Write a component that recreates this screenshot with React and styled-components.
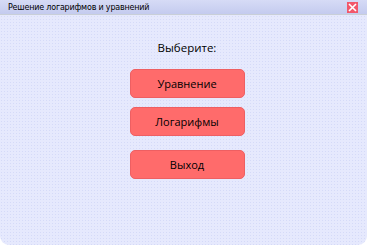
import React from 'react'
import styled, { createGlobalStyle } from 'styled-components'

const GlobalStyle = createGlobalStyle`
  html, body {
    margin: 0;
    padding: 0;
    background: #ffffff;
  }
  body {
    font-family: "Open Sans", "DejaVu Sans", sans-serif;
  }
`

const Window = styled.div`
  width: 367px;
  height: 245px;
  display: flex;
  flex-direction: column;
  background-color: #e6e9fd;
  background-image: radial-gradient(#d5daf8 0.6px, transparent 0.8px);
  background-size: 3px 3px;
  border-radius: 0 0 9px 9px;
  overflow: hidden;
`

const TitleBar = styled.div`
  height: 14px;
  display: flex;
  align-items: center;
  justify-content: space-between;
  padding: 0 9px 0 8px;
  background: linear-gradient(#d6dbf6, #c4cbef);
  border-bottom: 1px solid #c9cfd8;
`

const Title = styled.span`
  font-family: "DejaVu Sans", sans-serif;
  font-size: 8px;
  color: #000;
  letter-spacing: -0.2px;
`

const Close = styled.div`
  width: 11px;
  height: 11px;
  background: #f2576b;
  display: flex;
  align-items: center;
  justify-content: center;
`

const Body = styled.div`
  display: flex;
  flex-direction: column;
  align-items: center;
  padding: 25px 0 0 7px;
`

const Prompt = styled.div`
  font-size: 11.5px;
  color: #000;
  margin-bottom: 14px;
`

const MenuButton = styled.button`
  width: 115px;
  height: 29px;
  margin-top: ${p => p.$gap || 0}px;
  background: #ff6b6b;
  border: 1px solid #ee5f62;
  border-radius: 5px;
  font-family: "Open Sans", "DejaVu Sans", sans-serif;
  font-size: 11px;
  color: #000;
  padding: 0;
  cursor: pointer;
`

export default function App() {
  return (
    <>
      <GlobalStyle />
      <Window>
        <TitleBar>
          <Title>Решение логарифмов и уравнений</Title>
          <Close>
            <svg width="9" height="9" viewBox="0 0 9 9">
              <path d="M1 1L8 8M8 1L1 8" stroke="#fff" strokeWidth="1.6" />
            </svg>
          </Close>
        </TitleBar>
        <Body>
          <Prompt>Выберите:</Prompt>
          <MenuButton>Уравнение</MenuButton>
          <MenuButton $gap={9}>Логарифмы</MenuButton>
          <MenuButton $gap={14}>Выход</MenuButton>
        </Body>
      </Window>
    </>
  )
}
